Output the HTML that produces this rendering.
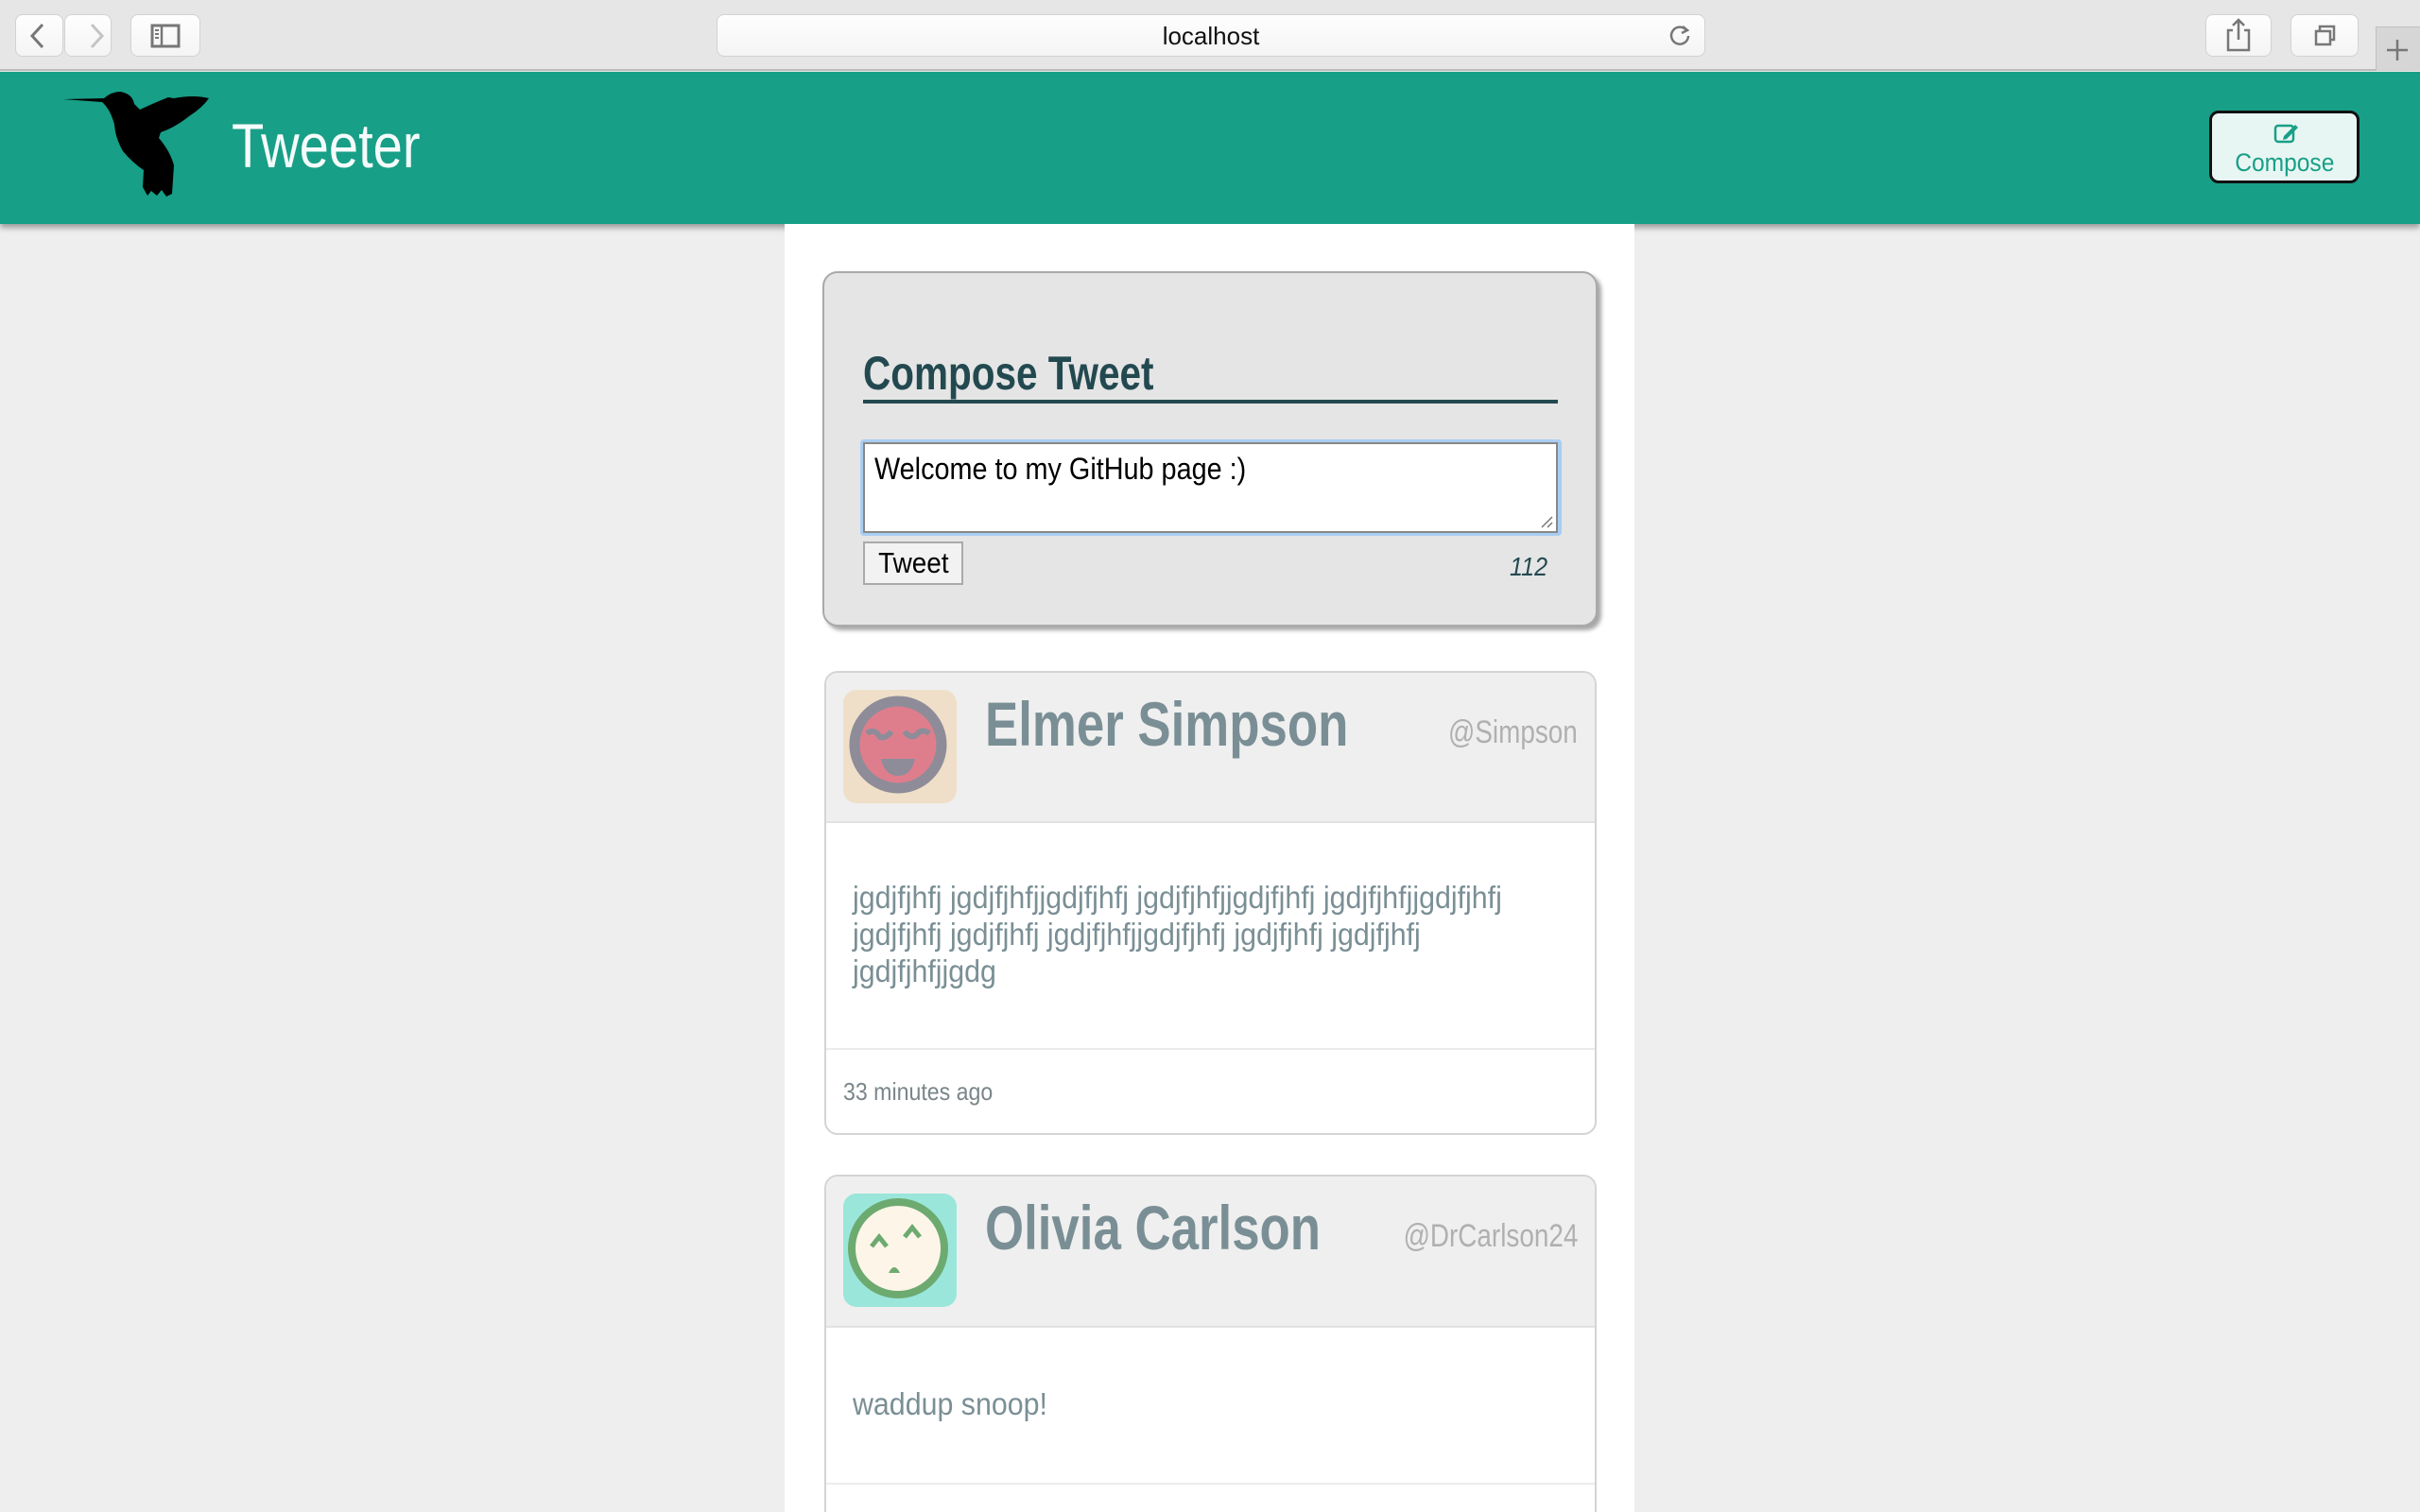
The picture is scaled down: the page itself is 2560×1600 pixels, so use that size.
<!DOCTYPE html>
<html><head><meta charset="utf-8"><style>
*{box-sizing:border-box;margin:0;padding:0}
html,body{width:2560px;height:1600px;overflow:hidden}
body{background:#eeeeee;font-family:"Liberation Sans",sans-serif}
#w{position:relative;width:2560px;height:1600px;overflow:hidden}
.a{position:absolute}
.s{display:inline-block;transform-origin:left top;white-space:nowrap}
.tb{left:0;top:0;width:2560px;height:75px;background:#e6e6e6;border-bottom:2px solid #bdbdbd}
.btn{background:linear-gradient(#fefefe,#f4f4f4);border:1px solid #d2d2d2;border-radius:8px}
.hdr{left:0;top:76px;width:2560px;height:161px;background:#189f87;box-shadow:0 4px 6px rgba(0,0,0,.35)}
.col{left:830px;top:237px;width:899px;height:1363px;background:#fff}
.card{border:2px solid #d4d4d4;border-radius:14px;background:#fff;overflow:hidden}
.ch{background:#efefef;border-bottom:2px solid #e2e2e2}
.nm{font-weight:bold;color:#7a8f95;font-size:66px;transform:scaleX(.8)}
.hd{color:#b0b0b0;font-size:34px;transform:scaleX(.82);transform-origin:right top}
.bd{color:#7a8f95;font-size:33px;line-height:39px;transform:scaleX(.92)}
</style></head><body><div id="w">
<div class="a tb"></div>
<div class="a btn" style="left:16px;top:15px;width:51px;height:45px"></div>
<div class="a btn" style="left:68px;top:15px;width:50px;height:45px"></div>
<svg class="a" style="left:16px;top:15px" width="102" height="45"><path d="M29 11 L18 23 L29 35" stroke="#777" stroke-width="3" fill="none"/><path d="M81 11 L92 23 L81 35" stroke="#c4c4c4" stroke-width="3" fill="none"/></svg>
<div class="a btn" style="left:138px;top:15px;width:74px;height:45px"></div>
<svg class="a" style="left:138px;top:15px" width="74" height="45"><rect x="23" y="12" width="28" height="22" stroke="#777" stroke-width="3" fill="none"/><line x1="33" y1="12" x2="33" y2="34" stroke="#777" stroke-width="2.5"/><path d="M26 17h4M26 21h4M26 25h4" stroke="#777" stroke-width="2"/></svg>
<div class="a btn" style="left:758px;top:15px;width:1046px;height:45px;text-align:center;font:26px/45px 'Liberation Sans',sans-serif;color:#111">localhost</div>
<svg class="a" style="left:1765px;top:24px" width="26" height="26"><path d="M19 8 A9 9 0 1 0 21 14" stroke="#777" stroke-width="2.5" fill="none"/><path d="M15 4 L20 8 L14 11" stroke="#777" stroke-width="2.5" fill="none"/></svg>
<div class="a btn" style="left:2333px;top:15px;width:70px;height:45px"></div>
<svg class="a" style="left:2333px;top:15px" width="70" height="45"><path d="M29 17h-5v21h22V17h-5M35 6v21M29 12l6-6 6 6" stroke="#777" stroke-width="2.5" fill="none"/></svg>
<div class="a btn" style="left:2423px;top:15px;width:72px;height:45px"></div>
<svg class="a" style="left:2423px;top:15px" width="72" height="45"><rect x="27" y="18" width="15" height="14" stroke="#777" stroke-width="2.5" fill="none"/><path d="M31 18v-5h15v14h-4" stroke="#777" stroke-width="2.5" fill="none"/></svg>
<div class="a" style="left:2513px;top:28px;width:47px;height:47px;background:#d6d6d6;border-left:1px solid #c0c0c0;border-top:1px solid #c0c0c0"></div>
<svg class="a" style="left:2513px;top:28px" width="47" height="47"><path d="M23 14v22M12 25h22" stroke="#777" stroke-width="2.5"/></svg>

<div class="a hdr"></div>
<svg class="a" style="left:0;top:80px" width="240" height="140"><path d="M67 25 L110 24 Q118 17 127 17 Q140 19 142 30 L148 36 Q165 28 178 23 L184 24 Q205 20 221 24 Q214 34 200 43 Q185 55 170 60 L168 66 Q180 80 184 95 L182 125 L176 128 L171 121 L166 127 L160 122 L156 127 L151 118 L152 100 Q140 92 130 80 Q122 66 121 52 Q117 36 108 28 Z" fill="#000"/></svg>
<div class="a s" style="left:245px;top:116px;font-size:66px;color:#f4fbfa;transform:scaleX(.85)">Tweeter</div>
<div class="a" style="left:2337px;top:117px;width:159px;height:77px;background:#e8f6f3;border:3px solid #111;border-radius:10px;color:#189f87;text-align:center;font-size:27px">
<svg style="position:absolute;left:64px;top:9px" width="30" height="24"><rect x="3" y="4" width="19" height="17" rx="3" stroke="#189f87" stroke-width="2.5" fill="none"/><path d="M12 15 L24 3 L27 6 L15 18 L11 19 Z" fill="#189f87"/></svg>
<div style="position:absolute;left:0;right:0;top:37px"><span class="s" style="transform:scaleX(.91);transform-origin:center top">Compose</span></div></div>

<div class="a col"></div>
<div class="a" style="left:870px;top:287px;width:820px;height:376px;background:#e5e5e5;border:2px solid #a9a9a9;border-radius:16px;box-shadow:4px 4px 4px rgba(0,0,0,.35)"></div>
<div class="a s" style="left:913px;top:366px;font-size:50px;font-weight:bold;color:#234950;transform:scaleX(.81)">Compose Tweet</div>
<div class="a" style="left:913px;top:423px;width:735px;height:4px;background:#234950"></div>
<div class="a" style="left:910px;top:465px;width:742px;height:102px;border:4px solid #a9cdf2;border-radius:4px"></div>
<div class="a" style="left:913px;top:468px;width:735px;height:96px;background:#fff;border:2px solid #888;padding:8px 10px"><span class="s" style="font-size:32px;color:#000;transform:scaleX(.9)">Welcome to my GitHub page :)</span></div>
<svg class="a" style="left:1628px;top:544px" width="16" height="16"><path d="M3 14L14 3M9 14L14 9" stroke="#777" stroke-width="1.5"/></svg>
<div class="a" style="left:913px;top:573px;width:106px;height:46px;background:#f2f2f2;border:2px solid #aaa;font-size:31px;line-height:42px;text-align:center;color:#000"><span class="s" style="transform:scaleX(.9);transform-origin:center top">Tweet</span></div>
<div class="a s" style="left:1597px;top:584px;font-size:28px;font-style:italic;color:#234950;transform:scaleX(.9)">112</div>

<div class="a card" style="left:872px;top:710px;width:817px;height:491px">
<div class="ch" style="height:159px;position:relative">
<svg style="position:absolute;left:18px;top:18px" width="120" height="120"><rect width="120" height="120" rx="14" fill="#efdfc8"/><circle cx="58" cy="58" r="46" fill="#de7e8d" stroke="#8e8c99" stroke-width="11"/><path d="M25 46 q8-6 14 4 q6 2 12-6 M65 44 q6 8 12 4 q6-8 14-2" stroke="#8e8c99" stroke-width="6" fill="none"/><path d="M40 73 h36 q-4 18-18 18 q-14 0-18-18z" fill="#8e8c99"/></svg>
<div class="s nm" style="position:absolute;left:168px;top:16px">Elmer Simpson</div>
<div class="s hd" style="position:absolute;right:18px;top:44px">@Simpson</div></div>
<div class="s bd" style="position:absolute;left:28px;top:218px">jgdjfjhfj jgdjfjhfjjgdjfjhfj jgdjfjhfjjgdjfjhfj jgdjfjhfjjgdjfjhfj<br>jgdjfjhfj jgdjfjhfj jgdjfjhfjjgdjfjhfj jgdjfjhfj jgdjfjhfj<br>jgdjfjhfjjgdg</div>
<div style="position:absolute;left:0;right:0;top:397px;border-top:2px solid #ececec"></div>
<div class="s" style="position:absolute;left:18px;top:428px;font-size:26px;color:#7a8689;transform:scaleX(.89)">33 minutes ago</div>
</div>

<div class="a card" style="left:872px;top:1243px;width:817px;height:420px">
<div class="ch" style="height:160px;position:relative">
<svg style="position:absolute;left:18px;top:18px" width="120" height="120"><rect width="120" height="120" rx="14" fill="#9ae6da"/><circle cx="58" cy="58" r="49" fill="#fdf5e8" stroke="#6daa70" stroke-width="8"/><path d="M30 56 l8-10 l8 10 M65 46 l8-10 l8 10" stroke="#6daa70" stroke-width="5" fill="none"/><path d="M48 84 q6-12 12 0z" fill="#6daa70"/></svg>
<div class="s nm" style="position:absolute;left:168px;top:16px">Olivia Carlson</div>
<div class="s hd" style="position:absolute;right:18px;top:44px">@DrCarlson24</div></div>
<div class="s bd" style="position:absolute;left:28px;top:221px">waddup snoop!</div>
<div style="position:absolute;left:0;right:0;top:324px;border-top:2px solid #ececec"></div>
</div>
</div></body></html>
